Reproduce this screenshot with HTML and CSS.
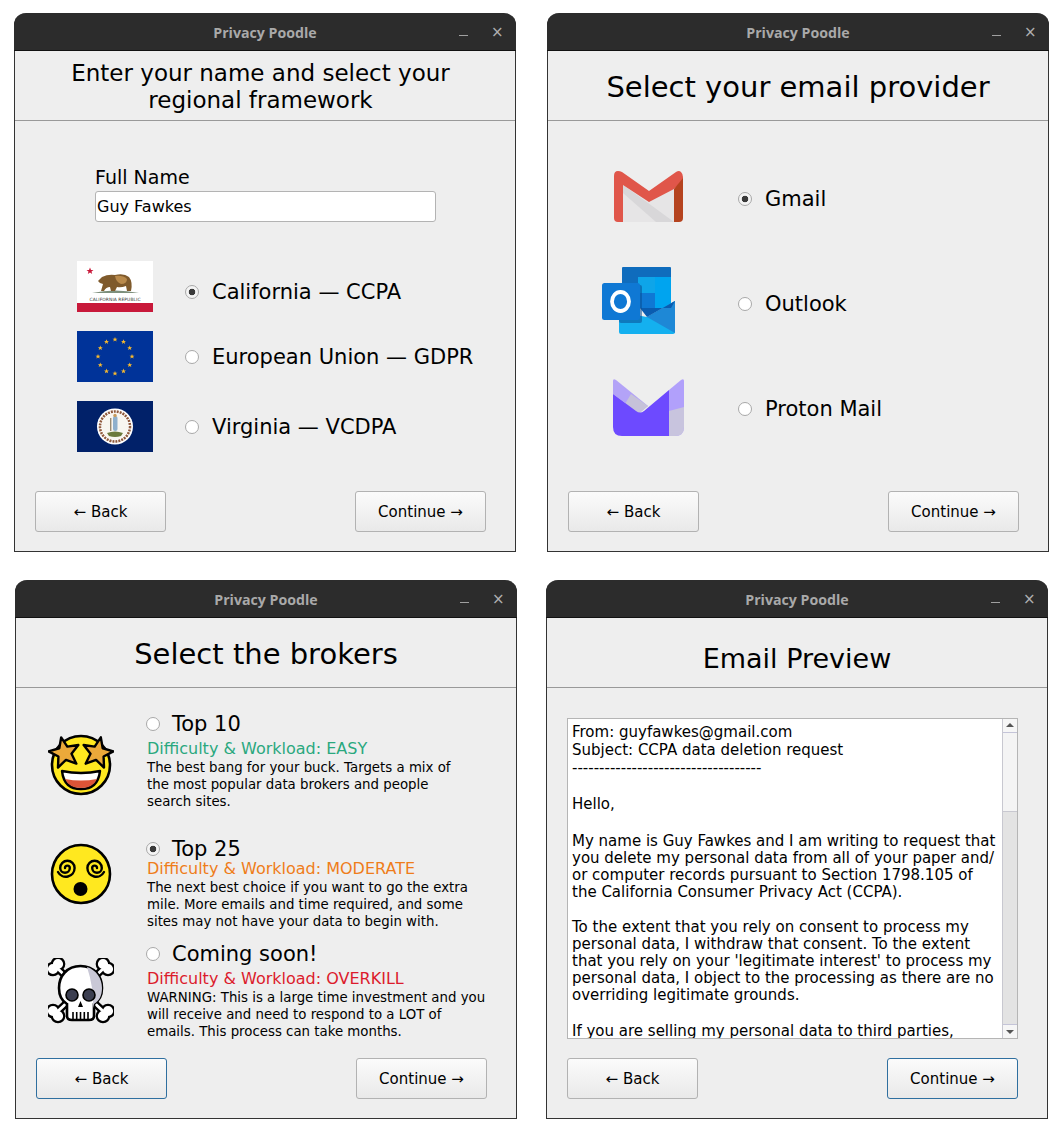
FILE: index.html
```html
<!DOCTYPE html>
<html lang="en">
<head>
<meta charset="utf-8">
<title>Privacy Poodle</title>
<link rel="stylesheet" href="styles.css">
</head>
<body>
<svg class="defs" width="0" height="0" aria-hidden="true">
  <defs>
    <polygon id="eustar" points="0,-2.6 0.7,-0.8 2.5,-0.8 1.1,0.3 1.6,2.1 0,1 -1.6,2.1 -1.1,0.3 -2.5,-0.8 -0.7,-0.8"/>
    <polygon id="bigstar" points="0,-16 4.1,-5.7 15.2,-4.9 6.7,2.2 9.4,12.9 0,7 -9.4,12.9 -6.7,2.2 -15.2,-4.9 -4.1,-5.7"/>
    <g id="bone">
      <line x1="9" y1="10" x2="56" y2="54"/>
      <circle cx="5" cy="11" r="3.6"/><circle cx="10" cy="6" r="3.6"/>
      <circle cx="55" cy="58" r="3.6"/><circle cx="60" cy="53" r="3.6"/>
    </g>
  </defs>
</svg>

<main class="desktop">
  <section class="window win-a">
    <header class="titlebar">
      <span class="title">Privacy Poodle</span>
      <span class="win-controls"><i class="ctl-min"></i><i class="ctl-close">×</i></span>
    </header>
    <h1 class="heading heading-two">Enter your name and select your<br>regional framework</h1>
    <div class="body body-name">
      <label class="name-label" for="fullname">Full Name</label>
      <input class="name-input" id="fullname" type="text" value="Guy Fawkes">
      <div class="regions">
        <div class="region">
          <svg class="flag" viewBox="0 0 76 51">
            <rect width="76" height="51" fill="#fff"/>
            <rect y="42" width="76" height="9" fill="#c8193a"/>
            <polygon transform="translate(13 10)" points="0,-3.6 1,-1.1 3.500,-1.1 1.500,0.5 2.200,3 0,1.500 -2.200,3 -1.500,0.5 -3.500,-1.1 -1,-1.1" fill="#c8193a"/>
            <path d="M15 32 Q38 27 62 32 Z" fill="#7d8f7c"/>
            <path d="M21 20 L25 16 Q31 13 38 14 Q47 12 52 16 Q56 21 54 30 L50 30 L49 25 Q44 27 40 26 L38 30 L34 30 L33 26 Q29 26 27 30 L24 30 L26 23 Q23 23 21 20 Z" fill="#7f5a2c"/>
            <path d="M38 15 Q46 14 50 18 Q50 23 44 23 Q39 21 38 15 Z" fill="#b98a4c"/>
            <text class="flag-text" x="38" y="39.500" text-anchor="middle" textLength="51">CALIFORNIA REPUBLIC</text>
          </svg>
          <label class="choice choice-low"><input type="radio" name="region" checked><span>California — CCPA</span></label>
        </div>
        <div class="region">
          <svg class="flag" viewBox="0 0 76 51">
            <rect width="76" height="51" fill="#003399"/>
            <g fill="#f5b82e">
              <use href="#eustar" x="38" y="8.500"/><use href="#eustar" x="46.500" y="10.800"/><use href="#eustar" x="52.700" y="17"/>
              <use href="#eustar" x="55" y="25.500"/><use href="#eustar" x="52.700" y="34"/><use href="#eustar" x="46.500" y="40.200"/>
              <use href="#eustar" x="38" y="42.500"/><use href="#eustar" x="29.500" y="40.200"/><use href="#eustar" x="23.300" y="34"/>
              <use href="#eustar" x="21" y="25.500"/><use href="#eustar" x="23.300" y="17"/><use href="#eustar" x="29.500" y="10.800"/>
            </g>
          </svg>
          <label class="choice"><input type="radio" name="region"><span>European Union — GDPR</span></label>
        </div>
        <div class="region">
          <svg class="flag" viewBox="0 0 76 51">
            <rect width="76" height="51" fill="#012169"/>
            <circle cx="38" cy="25.500" r="18" fill="#fff"/>
            <circle cx="38" cy="25.500" r="15" fill="none" stroke="#8f5a3c" stroke-width="2.600" stroke-dasharray="2 1"/>
            <circle cx="38" cy="25.500" r="13.200" fill="#f8f6f0"/>
            <rect x="36" y="15" width="4.500" height="15" rx="2" fill="#8fb0cc"/>
            <circle cx="38" cy="14.500" r="1.700" fill="#c99a5b"/>
            <rect x="33" y="17" width="1.400" height="13" fill="#9a8a70"/>
            <path d="M30 32 Q38 29 46 32 L44 35 Q38 37 32 35 Z" fill="#6b7a3c"/>
          </svg>
          <label class="choice"><input type="radio" name="region"><span>Virginia — VCDPA</span></label>
        </div>
      </div>
    </div>
    <footer class="actions">
      <button class="btn" type="button">← Back</button>
      <button class="btn" type="button">Continue →</button>
    </footer>
  </section>

  <section class="window win-b">
    <header class="titlebar">
      <span class="title">Privacy Poodle</span>
      <span class="win-controls"><i class="ctl-min"></i><i class="ctl-close">×</i></span>
    </header>
    <h1 class="heading heading-large">Select your email provider</h1>
    <div class="body body-provider">
      <div class="provider">
        <div class="provider-logo">
          <svg class="logo-gmail" viewBox="0 0 69 51">
            <polygon points="9,12 35,30 60,12 60,51 9,51" fill="#e6e5e6"/>
            <polygon points="9,14 30,29 60,51 42,51 9,22" fill="#d8d7d9"/>
            <path d="M0 5 Q0 0 4 0 Q6 0 8 1 L35 20 L62 1 Q65 -1 67 1 Q69 3 69 6 L69 10 L60 18 L35 31 L9 14 L9 51 L4 51 Q0 51 0 47 Z" fill="#e0564a"/>
            <path d="M60 18 L69 7 L69 47 Q69 51 65 51 L60 51 Z" fill="#b5431f"/>
          </svg>
        </div>
        <label class="choice"><input type="radio" name="provider" checked><span>Gmail</span></label>
      </div>
      <div class="provider">
        <div class="provider-logo">
          <svg class="logo-outlook" viewBox="0 0 73 67">
            <path d="M20 1 Q20 0 21 0 L68 0 Q69 0 69 1 L69 35 L20 40 Z" fill="#0f6cbd"/>
            <rect x="36" y="10" width="33" height="24" fill="#0ea5e9"/>
            <rect x="20" y="10" width="16" height="35" fill="#0f6cbd"/>
            <rect x="53" y="10" width="16" height="31" fill="#00a4ef"/>
            <rect x="36" y="26" width="17" height="15" fill="#0f78d4"/>
            <path d="M17 45 L45 50 L73 34 L73 65 Q73 67 71 67 L19 67 Q17 67 17 65 Z" fill="#14b0ef"/>
            <path d="M45 50 L73 34 L73 66 Z" fill="#1e88d6"/>
            <path d="M38 41 L45 50 L73 34 L69 41 Z" fill="#0a5cb0"/>
            <rect x="17" y="18" width="23" height="38" rx="2" fill="#0a4f94" opacity=".55"/>
            <rect x="0" y="16" width="38" height="37" rx="2.500" fill="#0f78d4"/>
            <ellipse cx="18.500" cy="34.500" rx="8.500" ry="9.500" fill="none" stroke="#fff" stroke-width="3.800"/>
          </svg>
        </div>
        <label class="choice"><input type="radio" name="provider"><span>Outlook</span></label>
      </div>
      <div class="provider">
        <div class="provider-logo">
          <svg class="logo-proton" viewBox="0 0 71 57">
            <path d="M0 2 Q0 -1 3 1 L35 27 L26 34 L0 15 Z" fill="#b3a3f7"/>
            <path d="M18 15 L35 27 L28 33 Q26 34 23 33 L12 25 Z" fill="#c6c2d9"/>
            <path d="M56 11 L68 1 Q71 -1 71 2 L71 48 Q71 57 62 57 L56 57 Z" fill="#b1a0fb"/>
            <path d="M56 32 L71 28 L71 48 Q71 57 62 57 L56 57 Z" fill="#c8c4de"/>
            <path d="M0 15 L23 32 Q27 35 31 32 L56 11 L56 57 L9 57 Q0 57 0 48 Z" fill="#6d4aff"/>
          </svg>
        </div>
        <label class="choice"><input type="radio" name="provider"><span>Proton Mail</span></label>
      </div>
    </div>
    <footer class="actions">
      <button class="btn" type="button">← Back</button>
      <button class="btn" type="button">Continue →</button>
    </footer>
  </section>

  <section class="window win-c">
    <header class="titlebar">
      <span class="title">Privacy Poodle</span>
      <span class="win-controls"><i class="ctl-min"></i><i class="ctl-close">×</i></span>
    </header>
    <h1 class="heading heading-large">Select the brokers</h1>
    <div class="body body-brokers">
      <article class="broker broker-top10">
        <svg class="emoji" viewBox="0 0 66 66">
          <circle cx="33" cy="33" r="29" fill="#ffe81f" stroke="#000" stroke-width="2.600"/>
          <path d="M14 39 Q33 43 52 39 Q50 57 33 57 Q16 57 14 39 Z" fill="#fff" stroke="#000" stroke-width="2.400" stroke-linejoin="round"/>
          <path d="M17 47 Q33 50 49 47 Q45 56 33 56 Q21 56 17 47 Z" fill="#dc5437"/>
          <use href="#bigstar" transform="translate(16.500 21) rotate(-12)" fill="#eba93a" stroke="#000" stroke-width="2.400" stroke-linejoin="round"/>
          <use href="#bigstar" transform="translate(49.500 21) rotate(12)" fill="#eba93a" stroke="#000" stroke-width="2.400" stroke-linejoin="round"/>
        </svg>
        <div class="broker-text">
          <label class="choice broker-choice"><input type="radio" name="broker"><span>Top 10</span></label>
          <div class="difficulty level-easy">Difficulty &amp; Workload: EASY</div>
          <p class="desc">The best bang for your buck. Targets a mix of<br>the most popular data brokers and people<br>search sites.</p>
        </div>
      </article>
      <article class="broker broker-top25">
        <svg class="emoji" viewBox="0 0 66 66">
          <circle cx="33" cy="33" r="29" fill="#ffe81f" stroke="#000" stroke-width="2.600"/>
          <path d="M17 27 a2.400 2.400 0 0 1 4.800 0 a4.800 4.800 0 0 1 -9.600 0 a7.200 7.200 0 0 1 14.400 0 a8.800 8.800 0 0 1 -16.600 4" fill="none" stroke="#000" stroke-width="2.400" stroke-linecap="round"/>
          <path d="M49 27 a2.400 2.400 0 0 0 -4.800 0 a4.800 4.800 0 0 0 9.600 0 a7.200 7.200 0 0 0 -14.400 0 a8.800 8.800 0 0 0 16.600 4" fill="none" stroke="#000" stroke-width="2.400" stroke-linecap="round"/>
          <circle cx="32.500" cy="48" r="7" fill="#000"/>
        </svg>
        <div class="broker-text">
          <label class="choice broker-choice"><input type="radio" name="broker" checked><span>Top 25</span></label>
          <div class="difficulty level-moderate">Difficulty &amp; Workload: MODERATE</div>
          <p class="desc">The next best choice if you want to go the extra<br>mile. More emails and time required, and some<br>sites may not have your data to begin with.</p>
        </div>
      </article>
      <article class="broker broker-soon">
        <svg class="emoji" viewBox="0 0 66 66">
          <g class="bone-back">
            <use href="#bone"/>
            <use href="#bone" transform="matrix(-1 0 0 1 65 0)"/>
          </g>
          <g class="bone-front">
            <use href="#bone"/>
            <use href="#bone" transform="matrix(-1 0 0 1 65 0)"/>
          </g>
          <path d="M32.500 8 C19 8 11 18 11 30 C11 38 14 43 19 46 L19 58 Q19 62 24 62 L41 62 Q46 62 46 58 L46 46 C51 43 54 38 54 30 C54 18 46 8 32.500 8 Z" fill="#fff" stroke="#000" stroke-width="2.600"/>
          <path d="M39 9 C48 12 54 20 54 30 C54 38 51 43 46 46 L45 50 Q46 30 39 9 Z" fill="#c9c8d6"/>
          <circle cx="24" cy="37" r="6" fill="#3b3e50" stroke="#000" stroke-width="1.600"/>
          <circle cx="41" cy="37" r="6" fill="#3b3e50" stroke="#000" stroke-width="1.600"/>
          <path d="M32.500 43 L30 49 L35 49 Z" fill="#000"/>
          <path d="M25 54 V62 M28.700 54 V62 M32.500 54 V62 M36.300 54 V62 M40 54 V62" stroke="#000" stroke-width="1.600"/>
        </svg>
        <div class="broker-text">
          <label class="choice broker-choice"><input type="radio" name="broker"><span>Coming soon!</span></label>
          <div class="difficulty level-overkill">Difficulty &amp; Workload: OVERKILL</div>
          <p class="desc">WARNING: This is a large time investment and you<br>will receive and need to respond to a LOT of<br>emails. This process can take months.</p>
        </div>
      </article>
    </div>
    <footer class="actions">
      <button class="btn btn-focus" type="button">← Back</button>
      <button class="btn" type="button">Continue →</button>
    </footer>
  </section>

  <section class="window win-d">
    <header class="titlebar">
      <span class="title">Privacy Poodle</span>
      <span class="win-controls"><i class="ctl-min"></i><i class="ctl-close">×</i></span>
    </header>
    <h1 class="heading heading-medium">Email Preview</h1>
    <div class="body body-preview">
      <div class="textbox">
        <div class="email">
          <p class="email-head">From: guyfawkes@gmail.com
Subject: CCPA data deletion request
-----------------------------------</p>
          <p class="email-hello">Hello,</p>
          <p class="email-p1">My name is Guy Fawkes and I am writing to request that
you delete my personal data from all of your paper and/
or computer records pursuant to Section 1798.105 of
the California Consumer Privacy Act (CCPA).</p>
          <p class="email-p2">To the extent that you rely on consent to process my
personal data, I withdraw that consent. To the extent
that you rely on your 'legitimate interest' to process my
personal data, I object to the processing as there are no
overriding legitimate grounds.</p>
          <p class="email-p3">If you are selling my personal data to third parties,</p>
        </div>
        <div class="scrollbar">
          <div class="sb-btn sb-up"></div>
          <div class="sb-thumb"></div>
          <div class="sb-trough"></div>
          <div class="sb-btn sb-down"></div>
        </div>
      </div>
    </div>
    <footer class="actions">
      <button class="btn" type="button">← Back</button>
      <button class="btn btn-focus" type="button">Continue →</button>
    </footer>
  </section>
</main>
</body>
</html>
```

FILE: styles.css
```css
* { box-sizing: border-box; }
html, body { margin: 0; padding: 0; background: #fff; }
body { font-family: "DejaVu Sans", sans-serif; color: #000; }
.defs { position: absolute; }
.desktop { position: relative; width: 1061px; height: 1132px; overflow: hidden; }

.window {
  position: absolute;
  width: 502px;
  height: 539px;
  display: flex;
  flex-direction: column;
  background: #eeeeee;
  border: 1px solid #333;
  border-top: 0;
  border-radius: 12px 12px 0 0;
}
.win-a { left: 14px; top: 13px; }
.win-b { left: 547px; top: 13px; }
.win-c { left: 15px; top: 580px; }
.win-d { left: 546px; top: 580px; }

.titlebar {
  height: 38px;
  margin: 0 -1px;
  padding-top: 2px;
  flex: none;
  position: relative;
  display: flex;
  align-items: center;
  justify-content: center;
  background: #2c2c2c;
  border-radius: 12px 12px 0 0;
  border-bottom: 1px solid #111;
}
.title { font: 700 14.200px "Open Sans", sans-serif; color: #a9a9a9; }
.win-controls { position: absolute; top: 0; right: 0; height: 37px; width: 70px; }
.ctl-min { position: absolute; left: 13px; top: 22px; width: 9px; height: 1px; background: #a0a0a0; }
.ctl-close { position: absolute; left: 45px; top: 7px; font: normal 15px/24px "DejaVu Sans", sans-serif; color: #b0b0b0; }

.heading {
  flex: none;
  height: 70px;
  margin: 0;
  font-weight: 400;
  text-align: center;
  border-bottom: 1px solid #999;
}
.heading-two { font-size: 23px; line-height: 27px; padding: 9px 9px 0 0; }
.heading-large { font-size: 29px; line-height: 36px; padding-top: 18px; }
.heading-medium { font-size: 27px; line-height: 32px; padding-top: 25px; }

.body { flex: 1; min-height: 0; }
.actions {
  flex: none;
  display: flex;
  justify-content: space-between;
  padding: 0 29px 19px 20px;
}
.btn {
  width: 131px;
  height: 41px;
  font: 15px "DejaVu Sans", sans-serif;
  color: #000;
  background: linear-gradient(#fbfbfb, #e9e9e9);
  border: 1px solid #b2b2b2;
  border-radius: 3px;
  padding: 0;
}
.btn-focus { border-color: #2f6f9f; }

.choice { display: flex; align-items: center; gap: 13px; font-size: 21px; line-height: 24px; }
.choice-low { padding-top: 10px; }
.choice input {
  appearance: none;
  flex: none;
  width: 14px;
  height: 14px;
  margin: 0;
  background: #fff;
  border: 1px solid #a8a8a8;
  border-radius: 50%;
}
.choice input:checked { background: radial-gradient(circle, #3a3a3a 0 3px, #f4f4f4 3.600px); }

.body-name { padding: 46px 0 0 80px; }
.name-label { display: block; font-size: 19px; line-height: 20px; }
.name-input {
  display: block;
  width: 341px;
  height: 31px;
  margin-top: 4px;
  padding: 0 1px;
  font: 16px "DejaVu Sans", sans-serif;
  color: #000;
  background: #fff;
  border: 1px solid #b3b3b3;
  border-radius: 3px;
}
.regions { margin: 39px 0 0 -18px; display: flex; flex-direction: column; gap: 19px; }
.region { display: flex; align-items: center; gap: 32px; height: 51px; }
.flag { width: 76px; height: 51px; flex: none; display: block; }
.flag-text { font: 400 4.400px "DejaVu Sans", sans-serif; fill: #333; }

.body-provider { padding-top: 25px; }
.provider { display: flex; align-items: center; height: 105px; padding-left: 36px; }
.provider-logo { width: 154px; display: flex; justify-content: center; padding-right: 26px; flex: none; }
.logo-gmail { width: 69px; height: 51px; margin-bottom: 4px; }
.logo-outlook { width: 73px; height: 67px; margin: 0 20px 6px 0; }
.logo-proton { width: 71px; height: 57px; margin-bottom: 2px; }

.body-brokers { padding-top: 24px; }
.broker { display: flex; padding-left: 32px; gap: 32px; }
.broker-top25 { margin-top: 27px; }
.broker-soon { margin-top: 12px; }
.emoji { width: 66px; height: 66px; flex: none; }
.broker-top10 .emoji { margin-top: 20px; }
.broker-top25 .emoji { margin-top: 4px; }
.broker-soon .emoji { margin-top: 16px; }
.broker-text { flex: 1; min-width: 0; }
.broker-choice { gap: 12px; }
.difficulty { font-size: 16px; line-height: 18px; margin: 4px 0 0 1px; }
.broker-top25 .difficulty { margin-top: -1px; }
.level-easy { color: #2aa87e; }
.level-moderate { color: #ef7d1a; }
.level-overkill { color: #dc1b2c; }
.desc { margin: 1px 0 0 1px; font-size: 13.330px; line-height: 17px; white-space: nowrap; }

.bone-back { fill: #000; stroke: #000; stroke-width: 7.500px; stroke-linecap: round; }
.bone-back circle { stroke-width: 2.400px; }
.bone-front { fill: #fff; stroke: #fff; stroke-width: 3px; stroke-linecap: round; }
.bone-front circle { stroke-width: 0; }

.body-preview { padding: 30px 29px 19px 20px; }
.textbox {
  height: 321px;
  display: flex;
  background: #fff;
  border: 1px solid #b5b5b5;
  overflow: hidden;
}
.email {
  flex: 1;
  min-width: 0;
  padding: 4px 0 0 4px;
  font-size: 15px;
  overflow: hidden;
}
.email p { margin: 0; white-space: pre; line-height: 17px; }
.email .email-head, .email .email-hello { line-height: 18px; }
.email .email-hello { margin-top: 18px; }
.email .email-p1 { margin-top: 19.500px; }
.email .email-p2 { margin-top: 18px; }
.email .email-p3 { margin-top: 19px; }
.scrollbar {
  width: 15px;
  flex: none;
  display: flex;
  flex-direction: column;
  border-left: 1px solid #c8c8d0;
}
.sb-btn { height: 14px; flex: none; background: #f6f6f6; position: relative; }
.sb-up { border-bottom: 1px solid #c4c4d8; }
.sb-down { border-top: 1px solid #c4c4d8; }
.sb-up::after, .sb-down::after {
  content: "";
  position: absolute;
  left: 3px;
  border-left: 4px solid transparent;
  border-right: 4px solid transparent;
}
.sb-up::after { top: 4px; border-bottom: 4px solid #555; }
.sb-down::after { top: 5px; border-top: 4px solid #555; }
.sb-thumb { height: 79px; flex: none; background: #f4f4f4; border-bottom: 1px solid #c8c8d0; }
.sb-trough { flex: 1; background: #e3e3e3; }
```
